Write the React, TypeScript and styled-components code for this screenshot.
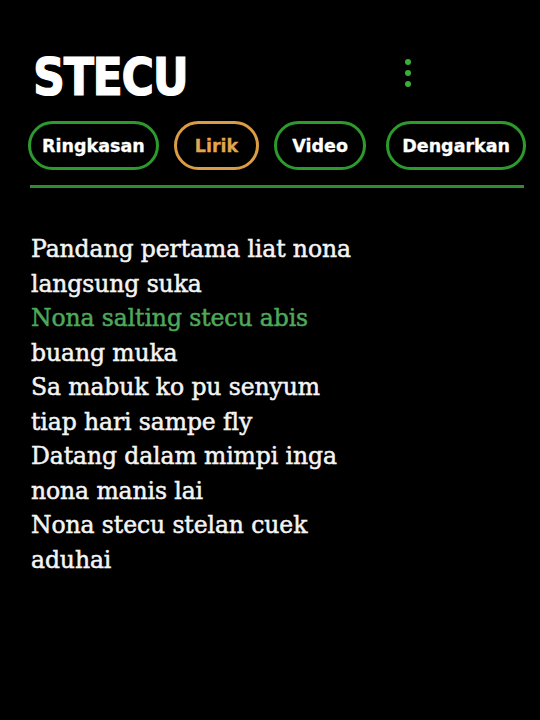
import React from 'react';
import styled, { createGlobalStyle } from 'styled-components';

const GlobalStyle = createGlobalStyle`
    html, body {
        margin: 0;
        padding: 0;
        background: #000000;
    }
    #root {
        min-height: 720px;
        background: #000000;
    }
`

const Page = styled.div`
    width: 540px;
    height: 720px;
    background: #000000;
    box-sizing: border-box;
    padding: 44px 14px 0 28px;
    overflow: hidden;
`

const Header = styled.div`
    display: flex;
    flex-direction: row;
    align-items: center;
    height: 66px;
`

const TitleWrap = styled.div`
    width: 372px;
    margin-left: 5px;
`

const Title = styled.h1`
    margin: 0;
    display: inline-block;
    font-family: "DejaVu Sans", sans-serif;
    font-weight: 700;
    font-size: 51px;
    letter-spacing: -1.5px;
    color: #ffffff;
    line-height: 1;
    -webkit-text-stroke: 1.2px #ffffff;
    transform: scaleX(0.87);
    transform-origin: left center;
`

const MenuButton = styled.button`
    display: flex;
    flex-direction: column;
    gap: 4.7px;
    background: none;
    border: none;
    padding: 0;
    margin-top: -8px;
    cursor: pointer;
`

const Dot = styled.span`
    width: 6px;
    height: 6px;
    border-radius: 50%;
    background: #38b038;
`

const Tabs = styled.div`
    display: flex;
    flex-direction: row;
    align-items: center;
    gap: 15px;
    margin-top: 11px;
`

const Tab = styled.button<{ $active?: boolean; $width: number; $extra?: number }>`
    width: ${p => p.$width}px;
    height: 49px;
    margin-left: ${p => p.$extra || 0}px;
    box-sizing: border-box;
    border-radius: 25px;
    border: 3px solid ${p => (p.$active ? '#dc9c44' : '#2c9a2c')};
    background: #000000;
    color: ${p => (p.$active ? '#e3a54e' : '#ffffff')};
    font-family: "DejaVu Sans", sans-serif;
    font-weight: 700;
    font-size: 17.5px;
    -webkit-text-stroke: 0.3px currentColor;
    padding: 0;
    display: flex;
    align-items: center;
    justify-content: center;
`

const Divider = styled.div`
    height: 3px;
    background: #2c8f2c;
    margin: 15px 2px 0 2px;
`

const Lyrics = styled.div`
    margin-top: 44px;
    padding-left: 3px;
    display: flex;
    flex-direction: column;
`

const Line = styled.div<{ $highlight?: boolean }>`
    font-family: "DejaVu Serif", serif;
    font-size: 23.5px;
    line-height: 34.5px;
    letter-spacing: -0.1px;
    color: ${p => (p.$highlight ? '#4ea85a' : '#f4f4f4')};
    -webkit-text-stroke: 0.5px currentColor;
`

const tabs = [
    { label: 'Ringkasan', width: 132 },
    { label: 'Lirik', width: 86, active: true },
    { label: 'Video', width: 93 },
    { label: 'Dengarkan', width: 141, extra: 5 },
]

const lines = [
    { text: 'Pandang pertama liat nona' },
    { text: 'langsung suka' },
    { text: 'Nona salting stecu abis', highlight: true },
    { text: 'buang muka' },
    { text: 'Sa mabuk ko pu senyum' },
    { text: 'tiap hari sampe fly' },
    { text: 'Datang dalam mimpi inga' },
    { text: 'nona manis lai' },
    { text: 'Nona stecu stelan cuek' },
    { text: 'aduhai' },
]

export const App = () => {
    return (
        <React.Fragment>
            <GlobalStyle />
            <Page>
                <Header>
                    <TitleWrap>
                        <Title>STECU</Title>
                    </TitleWrap>
                    <MenuButton aria-label="menu">
                        <Dot />
                        <Dot />
                        <Dot />
                    </MenuButton>
                </Header>
                <Tabs>
                    {tabs.map(t => (
                        <Tab key={t.label} $active={t.active} $width={t.width} $extra={t.extra}>
                            {t.label}
                        </Tab>
                    ))}
                </Tabs>
                <Divider />
                <Lyrics>
                    {lines.map((l, i) => (
                        <Line key={i} $highlight={l.highlight}>{l.text}</Line>
                    ))}
                </Lyrics>
            </Page>
        </React.Fragment>
    )
}

export default App
